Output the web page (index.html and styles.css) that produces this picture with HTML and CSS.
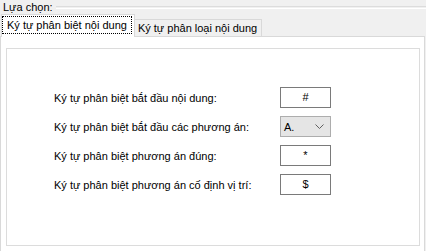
FILE: index.html
```html
<!DOCTYPE html>
<html>
<head>
<meta charset="utf-8">
<link rel="stylesheet" href="styles.css">
</head>
<body>
<div class="group">
  <div class="legend"><span class="legend-text">Lựa chọn:</span><span class="legend-line"></span></div>
  <div class="tabs">
    <div class="tab tab-active"><span class="focus">Ký tự phân biệt nội dung</span></div>
    <div class="tab">Ký tự phân loại nội dung</div>
  </div>
  <div class="panel">
    <div class="inner">
      <div class="form">
        <div class="label">Ký tự phân biệt bắt đầu nội dung:</div>
        <div class="box">#</div>
        <div class="label">Ký tự phân biệt bắt đầu các phương án:</div>
        <div class="select"><span>A.</span>
          <svg class="chev" width="9" height="5" viewBox="0 0 9 5"><path d="M0.5 0.5 L4.5 4.5 L8.5 0.5" fill="none" stroke="#606060" stroke-width="1"/></svg>
        </div>
        <div class="label">Ký tự phân biệt phương án đúng:</div>
        <div class="box">*</div>
        <div class="label">Ký tự phân biệt phương án cố định vị trí:</div>
        <div class="box">$</div>
      </div>
    </div>
  </div>
</div>
</body>
</html>
```

FILE: styles.css
```css
html, body {
  margin: 0;
  padding: 0;
  background: #f0f0f0;
  width: 426px;
  height: 251px;
  overflow: hidden;
  font-family: "Liberation Sans", Arial, sans-serif;
  font-size: 11px;
  color: #000;
}
.group {
  display: flex;
  flex-direction: column;
  height: 251px;
}
.legend {
  display: flex;
  align-items: center;
  height: 14px;
  padding-left: 3px;
}
.legend-text {
  line-height: 13px;
  margin-top: 1px;
}
.legend-line {
  flex: 1;
  height: 1px;
  border-top: 1px solid #dcdcdc;
  border-bottom: 1px solid #ffffff;
  margin-left: 3px;
}
.tabs {
  display: flex;
  align-items: flex-end;
  height: 22px;
  padding-left: 1px;
  position: relative;
  z-index: 1;
}
.tab {
  height: 17px;
  box-sizing: border-box;
  border: 1px solid #d9d9d9;
  border-bottom: none;
  background: #f0f0f0;
  padding: 0 4px 0 3px;
  line-height: 16px;
  white-space: nowrap;
}
.tab-active {
  height: 23px;
  margin-bottom: -1px;
  background: #ffffff;
  padding: 2px 3px 0 1px;
  margin-right: -1px;
}
.focus {
  display: inline-block;
  outline: 1px dotted #000;
  padding: 0 4px 0 4px;
  line-height: 16px;
}
.panel {
  flex: 1;
  margin-right: 1px;
  background: #ffffff;
  border: 1px solid #d9d9d9;
  border-bottom: none;
  padding: 11px 4px 0 5px;
}
.inner {
  height: 198px;
  box-sizing: border-box;
  border: 1px solid #dcdcdc;
  padding: 38px 0 0 47px;
}
.form {
  display: grid;
  grid-template-columns: 226px 51px;
  grid-auto-rows: 21px;
  row-gap: 8px;
  align-items: center;
}
.label {
  white-space: nowrap;
}
.box {
  height: 21px;
  box-sizing: border-box;
  border: 1px solid #7a7a7a;
  background: #fff;
  text-align: center;
  line-height: 19px;
}
.select {
  height: 21px;
  box-sizing: border-box;
  border: 1px solid #adadad;
  background: #e5e5e5;
  display: flex;
  align-items: center;
  justify-content: space-between;
  padding: 0 6px 0 3px;
}
.chev {
  display: block;
}
```
